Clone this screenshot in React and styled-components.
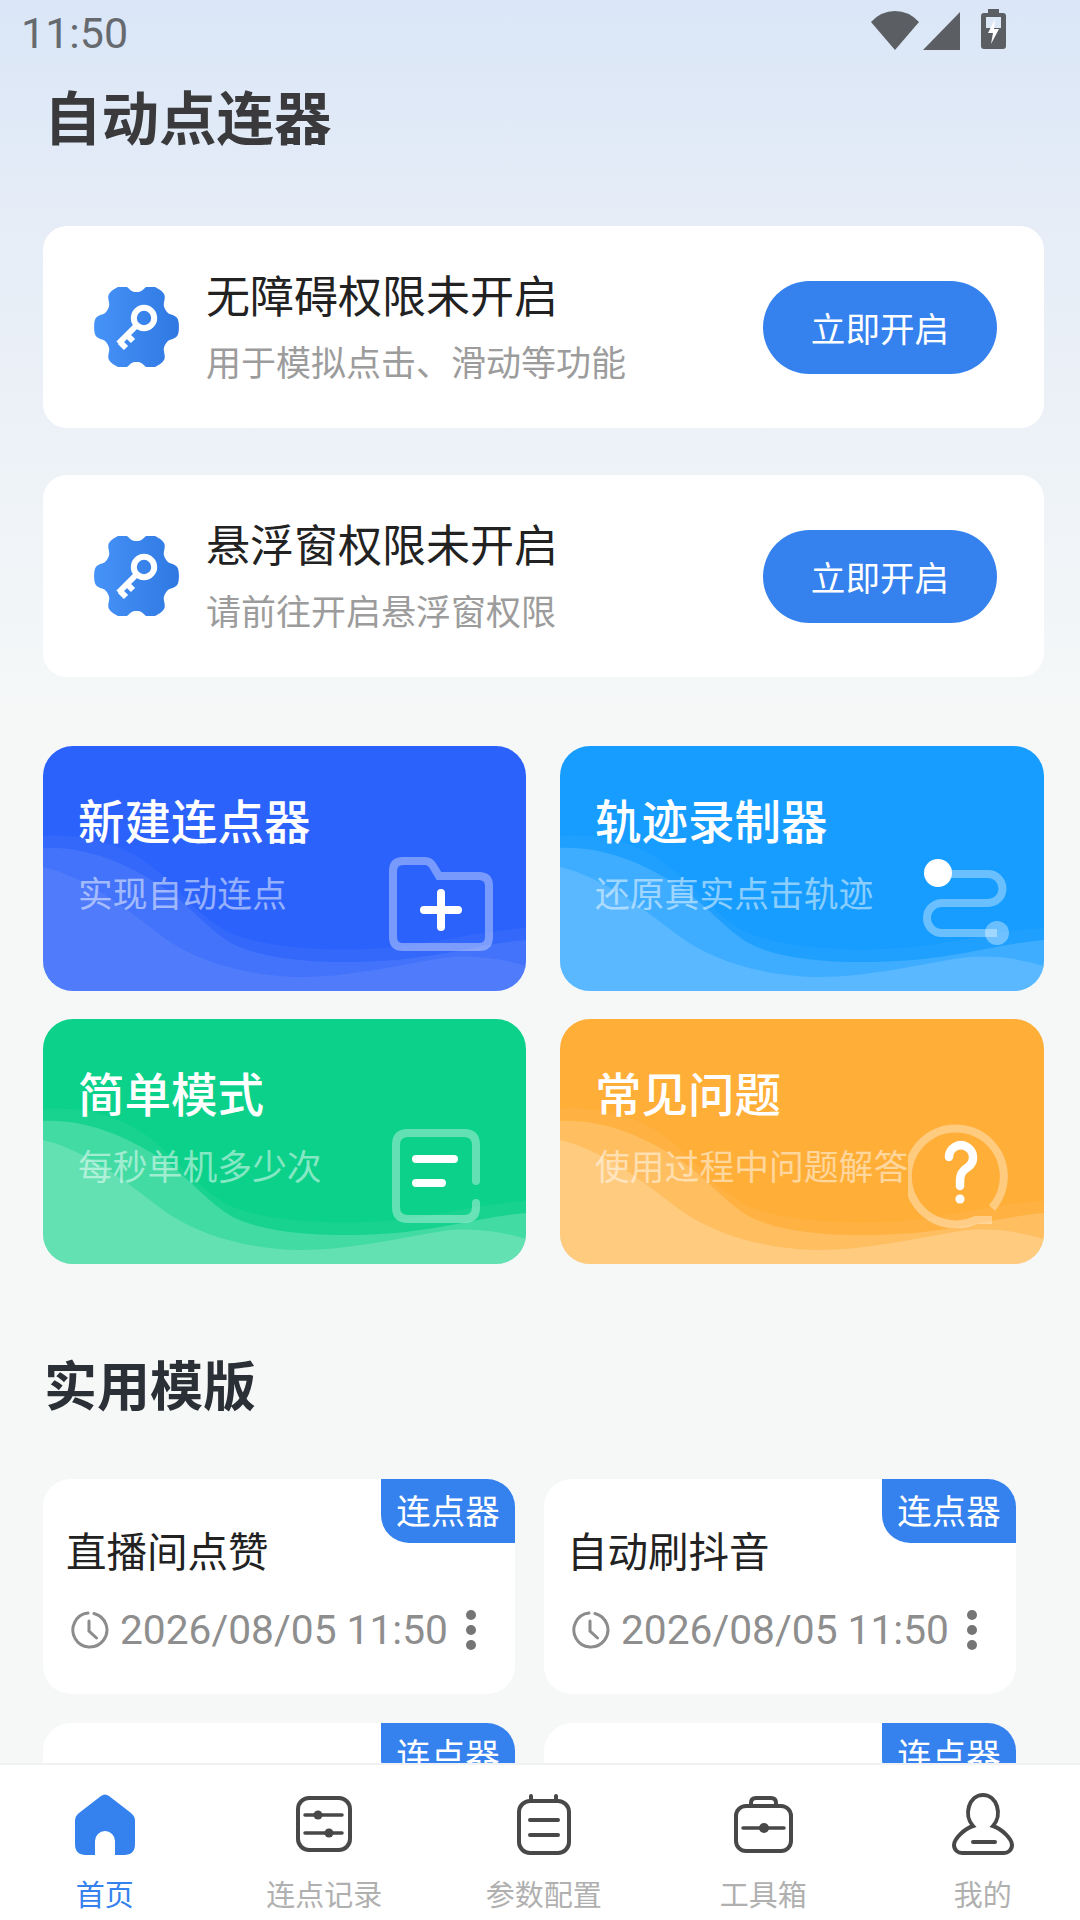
import React from "react";
import styled, { createGlobalStyle } from "styled-components";

const GlobalStyle = createGlobalStyle`
  html, body { margin: 0; padding: 0; }
  body { font-family: "Noto Sans CJK SC", "Noto Sans", sans-serif; }
`;

const permissions = [
  { title: "无障碍权限未开启", desc: "用于模拟点击、滑动等功能" },
  { title: "悬浮窗权限未开启", desc: "请前往开启悬浮窗权限" },
];

const tools = [
  { title: "新建连点器", desc: "实现自动连点", bg: "#2b62fb", alpha: [0.04, 0.08, 0.07], right: 33, bottom: 40, Icon: FolderIcon },
  { title: "轨迹录制器", desc: "还原真实点击轨迹", bg: "#169dff", alpha: [0.04, 0.14, 0.14], right: 14, bottom: 36, Icon: TrackIcon },
  { title: "简单模式", desc: "每秒单机多少次", bg: "#0cd18a", alpha: [0.05, 0.18, 0.18], right: 46, bottom: 41, Icon: NoteIcon },
  { title: "常见问题", desc: "使用过程中问题解答", bg: "#ffae38", alpha: [0.05, 0.16, 0.2], right: 32, bottom: 36, Icon: QuestionIcon },
];

const templates = ["直播间点赞", "自动刷抖音", "", ""];

const tabs = [
  { label: "首页", Icon: HomeIcon, active: true },
  { label: "连点记录", Icon: SlidersIcon },
  { label: "参数配置", Icon: PadIcon },
  { label: "工具箱", Icon: BoxIcon },
  { label: "我的", Icon: PersonIcon },
];

// wave outlines traced from the reference, in a 483x245 card
const wavePaths = [
  "M0 90 C30 88 60 92 90 108 C130 130 150 170 190 188 C230 204 300 206 353 201 C400 196 440 184 483 182 V245 H0 Z",
  "M0 102 C40 100 80 115 120 141 C150 162 165 184 190 198 C230 218 300 218 353 214 C400 210 440 198 483 194 V245 H0 Z",
  "M0 121 C40 130 80 160 120 191 C150 212 190 228 253 231 C300 232 350 220 400 212 C430 208 460 213 483 220 V245 H0 Z",
];

// six broad lobes with soft notches between them
const gearPath = () => {
  const pts = [];
  for (let i = 0; i < 180; i++) {
    const a = (i / 180) * Math.PI * 2;
    const r = 37.5 + 5 * Math.tanh(1.8 * (Math.cos(6 * a) + 0.3));
    pts.push(`${(42.5 + r * Math.cos(a)).toFixed(2)} ${(40 + r * 1.05 * Math.sin(a)).toFixed(2)}`);
  }
  return "M" + pts.join("L") + "Z";
};

function GearKey() {
  return (
    <svg width="85" height="80" viewBox="0 0 85 80">
      <defs>
        <linearGradient id="gearFill" x1="0" y1="0" x2="1" y2="0">
          <stop offset="0" stopColor="#4693f8" />
          <stop offset="1" stopColor="#2f78e2" />
        </linearGradient>
      </defs>
      <path d={gearPath()} fill="url(#gearFill)" />
      <circle cx="50" cy="31" r="10.2" fill="none" stroke="#fff" strokeWidth="6" />
      <path d="M43 38 L24.5 56.5 M26 55 L32 61 M33 48 L39 54" stroke="#fff" strokeWidth="6" fill="none" />
    </svg>
  );
}

function FolderIcon() {
  return (
    <svg width="104" height="94" viewBox="0 0 104 94">
      <path
        d="M4 14 Q4 4 14 4 H36 Q41 4 44 9 L50 19 H90 Q100 19 100 29 V80 Q100 90 90 90 H14 Q4 90 4 80 Z"
        fill="none"
        stroke="#fff"
        strokeOpacity="0.36"
        strokeWidth="8"
      />
      <path d="M52 36 V70 M35 53 H69" stroke="#fff" strokeWidth="8" strokeLinecap="round" />
    </svg>
  );
}

function TrackIcon() {
  return (
    <svg width="110" height="100" viewBox="0 0 110 100">
      <path
        d="M18 19 H68 A14.5 14.5 0 0 1 68 48 H22 A15 15 0 0 0 22 78 H77"
        fill="none"
        stroke="#fff"
        strokeOpacity="0.36"
        strokeWidth="8"
      />
      <circle cx="77" cy="78" r="12" fill="#fff" fillOpacity="0.36" />
      <circle cx="18" cy="18" r="14" fill="#fff" />
    </svg>
  );
}

function NoteIcon() {
  return (
    <svg width="88" height="94" viewBox="0 0 88 94">
      <path
        d="M84 52 V16 Q84 4 72 4 H16 Q4 4 4 16 V78 Q4 90 16 90 H72 Q84 90 84 78 V74"
        fill="none"
        stroke="#fff"
        strokeOpacity="0.36"
        strokeWidth="8"
        strokeLinecap="round"
      />
      <path d="M24 30 H62 M24 54 H50" stroke="#fff" strokeWidth="8" strokeLinecap="round" />
    </svg>
  );
}

function QuestionIcon() {
  return (
    <svg width="104" height="104" viewBox="0 0 104 104">
      <path
        d="M84 84 A48 48 0 1 0 68 96 L84 96"
        fill="none"
        stroke="#fff"
        strokeOpacity="0.36"
        strokeWidth="8"
      />
      <path
        d="M41 33 A12 12 0 1 1 60 43 C54 47 52 50 52 58 V62"
        fill="none"
        stroke="#fff"
        strokeWidth="8.5"
        strokeLinecap="round"
      />
      <circle cx="52" cy="75" r="4.6" fill="#fff" />
    </svg>
  );
}

function ClockIcon() {
  return (
    <svg width="38" height="38" viewBox="0 0 38 38">
      <path
        d="M23 2.5 A17 17 0 1 1 17 2.1 M18 10 V20 L25.5 27"
        fill="none"
        stroke="#8c8c8c"
        strokeWidth="3"
        strokeLinecap="round"
      />
    </svg>
  );
}

function HomeIcon() {
  return (
    <svg width="60" height="61" viewBox="0 0 60 61">
      <path
        d="M26 2 Q30 -1 34 2 L56 19 Q60 22 60 27 V50 Q60 61 49 61 H40 V47 A10 10 0 0 0 20 47 V61 H11 Q0 61 0 50 V27 Q0 22 4 19 Z"
        fill="#3582ee"
      />
    </svg>
  );
}

function SlidersIcon() {
  return (
    <svg width="56" height="56" viewBox="0 0 56 56" fill="none" stroke="#484848" strokeWidth="4">
      <rect x="2" y="2" width="52" height="52" rx="11" />
      <path d="M9 19 H46 M9 37 H46" strokeWidth="3.5" strokeLinecap="round" />
      <circle cx="22" cy="19" r="4.5" fill="#484848" stroke="none" />
      <circle cx="33" cy="37" r="4.5" fill="#484848" stroke="none" />
    </svg>
  );
}

function PadIcon() {
  return (
    <svg width="54" height="61" viewBox="0 0 54 61" fill="none" stroke="#484848" strokeWidth="4">
      <rect x="2" y="7" width="50" height="52" rx="11" />
      <path d="M14 2 V7 M39 2 V7 M13 26 H41 M13 41 H41" strokeLinecap="round" />
    </svg>
  );
}

function BoxIcon() {
  return (
    <svg width="59" height="57" viewBox="0 0 59 57" fill="none" stroke="#484848" strokeWidth="4">
      <rect x="2" y="10" width="55" height="45" rx="10" />
      <path d="M17 10 V7 Q17 2 22 2 H37 Q42 2 42 7 V10" />
      <path d="M9 32 H50" strokeWidth="3.5" strokeLinecap="round" />
      <circle cx="30" cy="32" r="5" fill="#484848" stroke="none" />
    </svg>
  );
}

function PersonIcon() {
  return (
    <svg width="62" height="62" viewBox="0 0 62 62" fill="none" stroke="#484848" strokeWidth="4">
      <path d="M21 33 C11 22 17 2 31 2 C45 2 51 22 41 33 C50 36 60 46 60 52 C60 57 56 60 52 60 H10 C6 60 2 57 2 52 C2 46 12 36 21 33 Z" />
      <path d="M21 49 H43" strokeLinecap="round" />
    </svg>
  );
}

const App = () => (
  <Page>
    <GlobalStyle />
    <StatusBar>
      <Clock>11:50</Clock>
      <StatusIcons>
        <svg width="48" height="39" viewBox="0 0 48 39">
          <path d="M24 39 L0 11 Q10 0 24 0 Q38 0 48 11 Z" fill="#5b5e63" />
        </svg>
        <svg width="37" height="38" viewBox="0 0 37 38">
          <path d="M0 38 L37 0 V38 Z" fill="#5b5e63" />
        </svg>
        <Battery width="25" height="40" viewBox="0 0 25 40">
          <path d="M7 0 H18 V4 H22 Q25 4 25 7 V37 Q25 40 22 40 H3 Q0 40 0 37 V7 Q0 4 3 4 H7 Z" fill="#5b5e63" />
          <rect x="5" y="8" width="15" height="11" fill="#dde8f6" />
          <path d="M14 10 L7 24 H12 L10 35 L18 20 H13 Z" fill="#fff" />
        </Battery>
      </StatusIcons>
    </StatusBar>

    <Main>
      <PageTitle>自动点连器</PageTitle>

      <PermissionList>
        {permissions.map((p) => (
          <PermissionCard key={p.title}>
            <GearKey />
            <PermissionText>
              <PermissionTitle>{p.title}</PermissionTitle>
              <PermissionDesc>{p.desc}</PermissionDesc>
            </PermissionText>
            <OpenButton>立即开启</OpenButton>
          </PermissionCard>
        ))}
      </PermissionList>

      <ToolGrid>
        {tools.map(({ title, desc, bg, alpha, right, bottom, Icon }) => (
          <ToolCard key={title} $bg={bg}>
            <ToolIcon $right={right} $bottom={bottom}>
              <Icon />
            </ToolIcon>
            <Waves viewBox="0 0 483 245" preserveAspectRatio="none">
              {wavePaths.map((d, i) => (
                <path key={i} d={d} fill="#fff" fillOpacity={alpha[i]} />
              ))}
            </Waves>
            <ToolTitle>{title}</ToolTitle>
            <ToolDesc>{desc}</ToolDesc>
          </ToolCard>
        ))}
      </ToolGrid>

      <SectionTitle>实用模版</SectionTitle>

      <TemplateGrid>
        {templates.map((name, i) => (
          <TemplateCard key={i}>
            <Badge>连点器</Badge>
            <TemplateName>{name}</TemplateName>
            {name && (
              <TemplateMeta>
                <ClockIcon />
                <DateText>2026/08/05 11:50</DateText>
                <MoreDots>
                  <i />
                  <i />
                  <i />
                </MoreDots>
              </TemplateMeta>
            )}
          </TemplateCard>
        ))}
      </TemplateGrid>
    </Main>

    <TabBar>
      {tabs.map(({ label, Icon, active }) => (
        <Tab key={label}>
          <TabIcon>
            <Icon />
          </TabIcon>
          <TabLabel $active={active}>{label}</TabLabel>
        </Tab>
      ))}
    </TabBar>
  </Page>
);

const Page = styled.div`
  width: 1080px;
  height: 1920px;
  display: flex;
  flex-direction: column;
  overflow: hidden;
  background: linear-gradient(180deg, #dae6f7 0, #e6edf7 230px, #f6f8f8 720px);
`;

const StatusBar = styled.div`
  height: 66px;
  flex: none;
  display: flex;
  align-items: center;
  justify-content: space-between;
  padding: 0 74px 0 21px;
`;

const Clock = styled.span`
  font-family: Roboto, sans-serif;
  font-size: 43px;
  line-height: 66px;
  color: #666a6f;
`;

const StatusIcons = styled.div`
  display: flex;
  align-items: flex-end;
  gap: 4px;
  height: 40px;
  margin-top: -6px;
`;

const Battery = styled.svg`
  margin-left: 17px;
  margin-bottom: 1px;
`;

const Main = styled.main`
  flex: 1;
  min-height: 0;
  overflow: hidden;
  padding: 0 36px 0 43px;
`;

const PageTitle = styled.h1`
  margin: 10px 0 0 1px;
  font-size: 57.5px;
  line-height: 78px;
  font-weight: 700;
  color: #3a3a3c;
`;

const PermissionList = styled.div`
  margin-top: 72px;
  display: flex;
  flex-direction: column;
  gap: 47px;
`;

const PermissionCard = styled.div`
  height: 202px;
  display: flex;
  align-items: center;
  padding: 0 47px 0 51px;
  border-radius: 24px;
  background: #fff;
`;

const PermissionText = styled.div`
  margin: -5px 0 0 27px;
  display: flex;
  flex-direction: column;
  gap: 14px;
`;

const PermissionTitle = styled.div`
  font-size: 44px;
  line-height: 58px;
  color: #222;
`;

const PermissionDesc = styled.div`
  font-size: 35px;
  line-height: 48px;
  color: #9c9c9c;
`;

const OpenButton = styled.button`
  margin-left: auto;
  width: 234px;
  height: 93px;
  border: 0;
  border-radius: 47px;
  background: #3582ee;
  color: #fff;
  font-family: inherit;
  font-size: 34.6px;
`;

const ToolGrid = styled.div`
  margin-top: 69px;
  display: grid;
  grid-template-columns: 483px 484px;
  column-gap: 34px;
  row-gap: 28px;
`;

const ToolCard = styled.div`
  position: relative;
  height: 245px;
  box-sizing: border-box;
  padding: 43px 35px 0;
  border-radius: 30px;
  overflow: hidden;
  background: ${(p) => p.$bg};
  color: #fff;
`;

const ToolIcon = styled.div`
  position: absolute;
  right: ${(p) => p.$right}px;
  bottom: ${(p) => p.$bottom}px;
  display: flex;
`;

const Waves = styled.svg`
  position: absolute;
  left: 0;
  top: 0;
  width: 100%;
  height: 100%;
`;

const ToolTitle = styled.div`
  position: relative;
  font-size: 46.5px;
  line-height: 60px;
  font-weight: 500;
`;

const ToolDesc = styled.div`
  position: relative;
  margin-top: 19px;
  font-size: 34.8px;
  line-height: 48px;
  white-space: nowrap;
  color: rgba(255, 255, 255, 0.5);
`;

const SectionTitle = styled.h2`
  margin: 83px 0 0 1px;
  font-size: 53px;
  line-height: 72px;
  font-weight: 700;
  color: #2b2f36;
`;

const TemplateGrid = styled.div`
  margin-top: 60px;
  display: grid;
  grid-template-columns: repeat(2, 472px);
  column-gap: 29px;
  row-gap: 29px;
`;

const TemplateCard = styled.div`
  position: relative;
  height: 215px;
  box-sizing: border-box;
  padding: 43px 24px 0 23px;
  border-radius: 28px;
  background: #fff;
`;

const Badge = styled.div`
  position: absolute;
  right: 0;
  top: 0;
  width: 134px;
  height: 64px;
  border-radius: 0 28px 0 28px;
  background: #3582ee;
  color: #fff;
  font-size: 34.5px;
  line-height: 60px;
  text-align: center;
`;

const TemplateName = styled.div`
  font-size: 40.5px;
  line-height: 56px;
  height: 56px;
  color: #222;
`;

const TemplateMeta = styled.div`
  margin: 32px 0 0 5px;
  display: flex;
  align-items: center;
  height: 40px;
`;

const DateText = styled.span`
  margin-left: 11px;
  font-family: Roboto, sans-serif;
  font-size: 40.7px;
  line-height: 40px;
  white-space: nowrap;
  color: #8e8e8e;
`;

const MoreDots = styled.div`
  margin-left: 18px;
  display: flex;
  flex-direction: column;
  gap: 5px;
  i {
    display: block;
    width: 10px;
    height: 10px;
    border-radius: 50%;
    background: #757575;
  }
`;

const TabBar = styled.nav`
  height: 157px;
  flex: none;
  box-sizing: border-box;
  position: relative;
  margin-left: -5px;
  display: grid;
  grid-template-columns: repeat(5, 219.5px);
  background: #fff;
  box-shadow: 5px 0 0 #fff;
  border-top: 2px solid #eff1f2;
`;

const Tab = styled.div`
  display: flex;
  flex-direction: column;
  align-items: center;
`;

const TabIcon = styled.div`
  height: 66px;
  margin-top: 26px;
  display: flex;
  align-items: center;
  justify-content: center;
`;

const TabLabel = styled.div`
  margin-top: 16px;
  font-size: 29px;
  line-height: 40px;
  color: ${(p) => (p.$active ? "#3582ee" : "#b0b0b0")};
`;

export default App;
